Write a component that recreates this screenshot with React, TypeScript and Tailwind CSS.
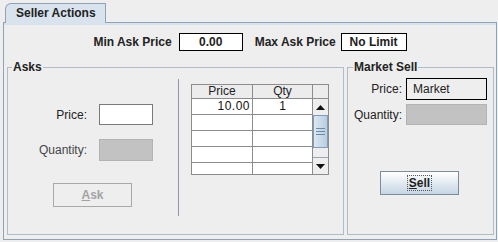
import React from 'react';

const rows = [
  { price: '10.00', qty: '1' },
  { price: '', qty: '' },
  { price: '', qty: '' },
  { price: '', qty: '' },
  { price: '', qty: '' },
];

const AskTable = () => {
  return (
    <div className="flex w-[138px] h-[91px] border border-[#8c8c8c] bg-white overflow-hidden">
      <div className="flex flex-col w-[121px]">
        <div className="flex h-[14px] bg-[#ececec] border-b border-[#8c8c8c] text-[12px] leading-[13px] text-[#222]">
          <div className="w-[61px] border-r border-[#8c8c8c] text-center">Price</div>
          <div className="w-[60px] border-r border-[#8c8c8c] text-center">Qty</div>
        </div>
        {rows.map((r, i) => (
          <div key={i} className="flex h-[16px] shrink-0 border-b border-[#8c8c8c] text-[12px] leading-[15px] text-[#111]">
            <div className="w-[61px] border-r border-[#8c8c8c] text-right pr-[2px] tracking-[0.5px]">{r.price}</div>
            <div className="w-[60px] border-r border-[#8c8c8c] text-center">{r.qty}</div>
          </div>
        ))}
      </div>
      <div className="flex flex-col w-[16px]">
        <div className="h-[14px] bg-[#ececec] border-b border-[#8c8c8c]" />
        <div className="h-[16px] flex items-center justify-center bg-[#eeeeee]">
          <svg width="9" height="5" viewBox="0 0 9 5"><path d="M0 5 L4.5 0 L9 5 Z" fill="#111" /></svg>
        </div>
        <div className="h-[33px] flex flex-col items-center justify-center gap-[2px] bg-gradient-to-r from-[#dce8f3] to-[#b9cde0] border border-[#7f9db9]">
          <div className="w-[9px] h-px bg-[#6f8aa6]" />
          <div className="w-[9px] h-px bg-[#6f8aa6]" />
          <div className="w-[9px] h-px bg-[#6f8aa6]" />
        </div>
        <div className="flex-1 bg-[#eeeeee] border-b border-[#9aa8b5]" />
        <div className="h-[16px] flex items-center justify-center bg-[#eeeeee]">
          <svg width="9" height="5" viewBox="0 0 9 5"><path d="M0 0 L9 0 L4.5 5 Z" fill="#111" /></svg>
        </div>
      </div>
    </div>
  );
};

const App = () => {
  return (
    <div className="w-[498px] h-[242px] bg-[#eeeeee] pt-[3px] pl-[3px] pr-[1px] pb-[2px] flex flex-col font-['Liberation_Sans',Arial,sans-serif] text-[#222]">
      <div className="relative z-10 -mb-px ml-[2px] w-[101px] h-[20px] bg-[#d8e3ed] border border-b-0 border-[#8ea3b8] rounded-tl-[6px] pl-[10px] text-[12px] font-bold leading-[19px]">
        Seller Actions
      </div>
      <div className="flex-1 flex flex-col border border-[#8ea3b8] bg-[#eeeeee]">
        <div className="h-[2px] bg-[#d8e3ed]" />
        <div className="flex justify-center items-center mt-[8px] text-[12px] font-bold">
          <span className="mr-[7px]">Min Ask Price</span>
          <div className="w-[64px] h-[18px] border border-black bg-white text-center leading-[16px]">0.00</div>
          <span className="ml-[12px] mr-[5px]">Max Ask Price</span>
          <div className="w-[66px] h-[18px] border border-black bg-white text-center leading-[16px]">No Limit</div>
        </div>
        <div className="flex flex-1 mt-[9px] ml-[3px] mr-[2px] mb-[4px] gap-[3px]">
          <fieldset className="w-[337px] border border-[#aebdca] px-0 pb-0 m-0 min-w-0">
            <legend className="ml-[4px] px-[1px] text-[12px] font-bold leading-[14px]">Asks</legend>
            <div className="flex">
              <div className="w-[170px] flex flex-col pt-[30px]">
                <div className="grid grid-cols-[79px_54px] gap-x-[12px] gap-y-[14px] items-center text-[12px]">
                  <span className="text-right">Price:</span>
                  <div className="h-[21px] border border-[#7a7a7a] bg-white" />
                  <span className="text-right text-[#444]">Quantity:</span>
                  <div className="h-[22px] border border-[#b3b3b3] bg-[#c2c2c2]" />
                </div>
                <div className="ml-[45px] mt-[22px] w-[79px] h-[24px] border border-[#a9a9a9] bg-[#eeeeee] flex items-center justify-center text-[12px] font-bold text-[#a3a3a3]">
                  <span><span className="underline">A</span>sk</span>
                </div>
              </div>
              <div className="w-px h-[137px] mt-[5px] bg-[#8d9aa6]" />
              <div className="ml-[12px] mt-[10px]">
                <AskTable />
              </div>
            </div>
          </fieldset>
          <fieldset className="w-[147px] border border-[#aebdca] px-0 pb-0 m-0 min-w-0">
            <legend className="ml-[5px] px-[1px] text-[12px] font-bold leading-[14px]">Market Sell</legend>
            <div className="flex flex-col">
              <div className="grid grid-cols-[54px_81px] gap-x-[4px] gap-y-[4px] items-center text-[12px] mt-[4px]">
                <span className="text-right">Price:</span>
                <div className="h-[22px] border border-black bg-[#eeeeee] pl-[6px] leading-[20px]">Market</div>
                <span className="text-right">Quantity:</span>
                <div className="h-[21px] border border-[#b3b3b3] bg-[#c2c2c2]" />
              </div>
              <div className="ml-[32px] mt-[46px] w-[79px] h-[24px] border border-[#7d8c9a] bg-gradient-to-b from-[#ffffff] to-[#c6d6e4] flex items-center justify-center text-[12px] font-bold">
                <span className="border border-dotted border-[#555] px-[1px] leading-[14px]"><span className="underline">S</span>ell</span>
              </div>
            </div>
          </fieldset>
        </div>
      </div>
    </div>
  );
};

export default App;
